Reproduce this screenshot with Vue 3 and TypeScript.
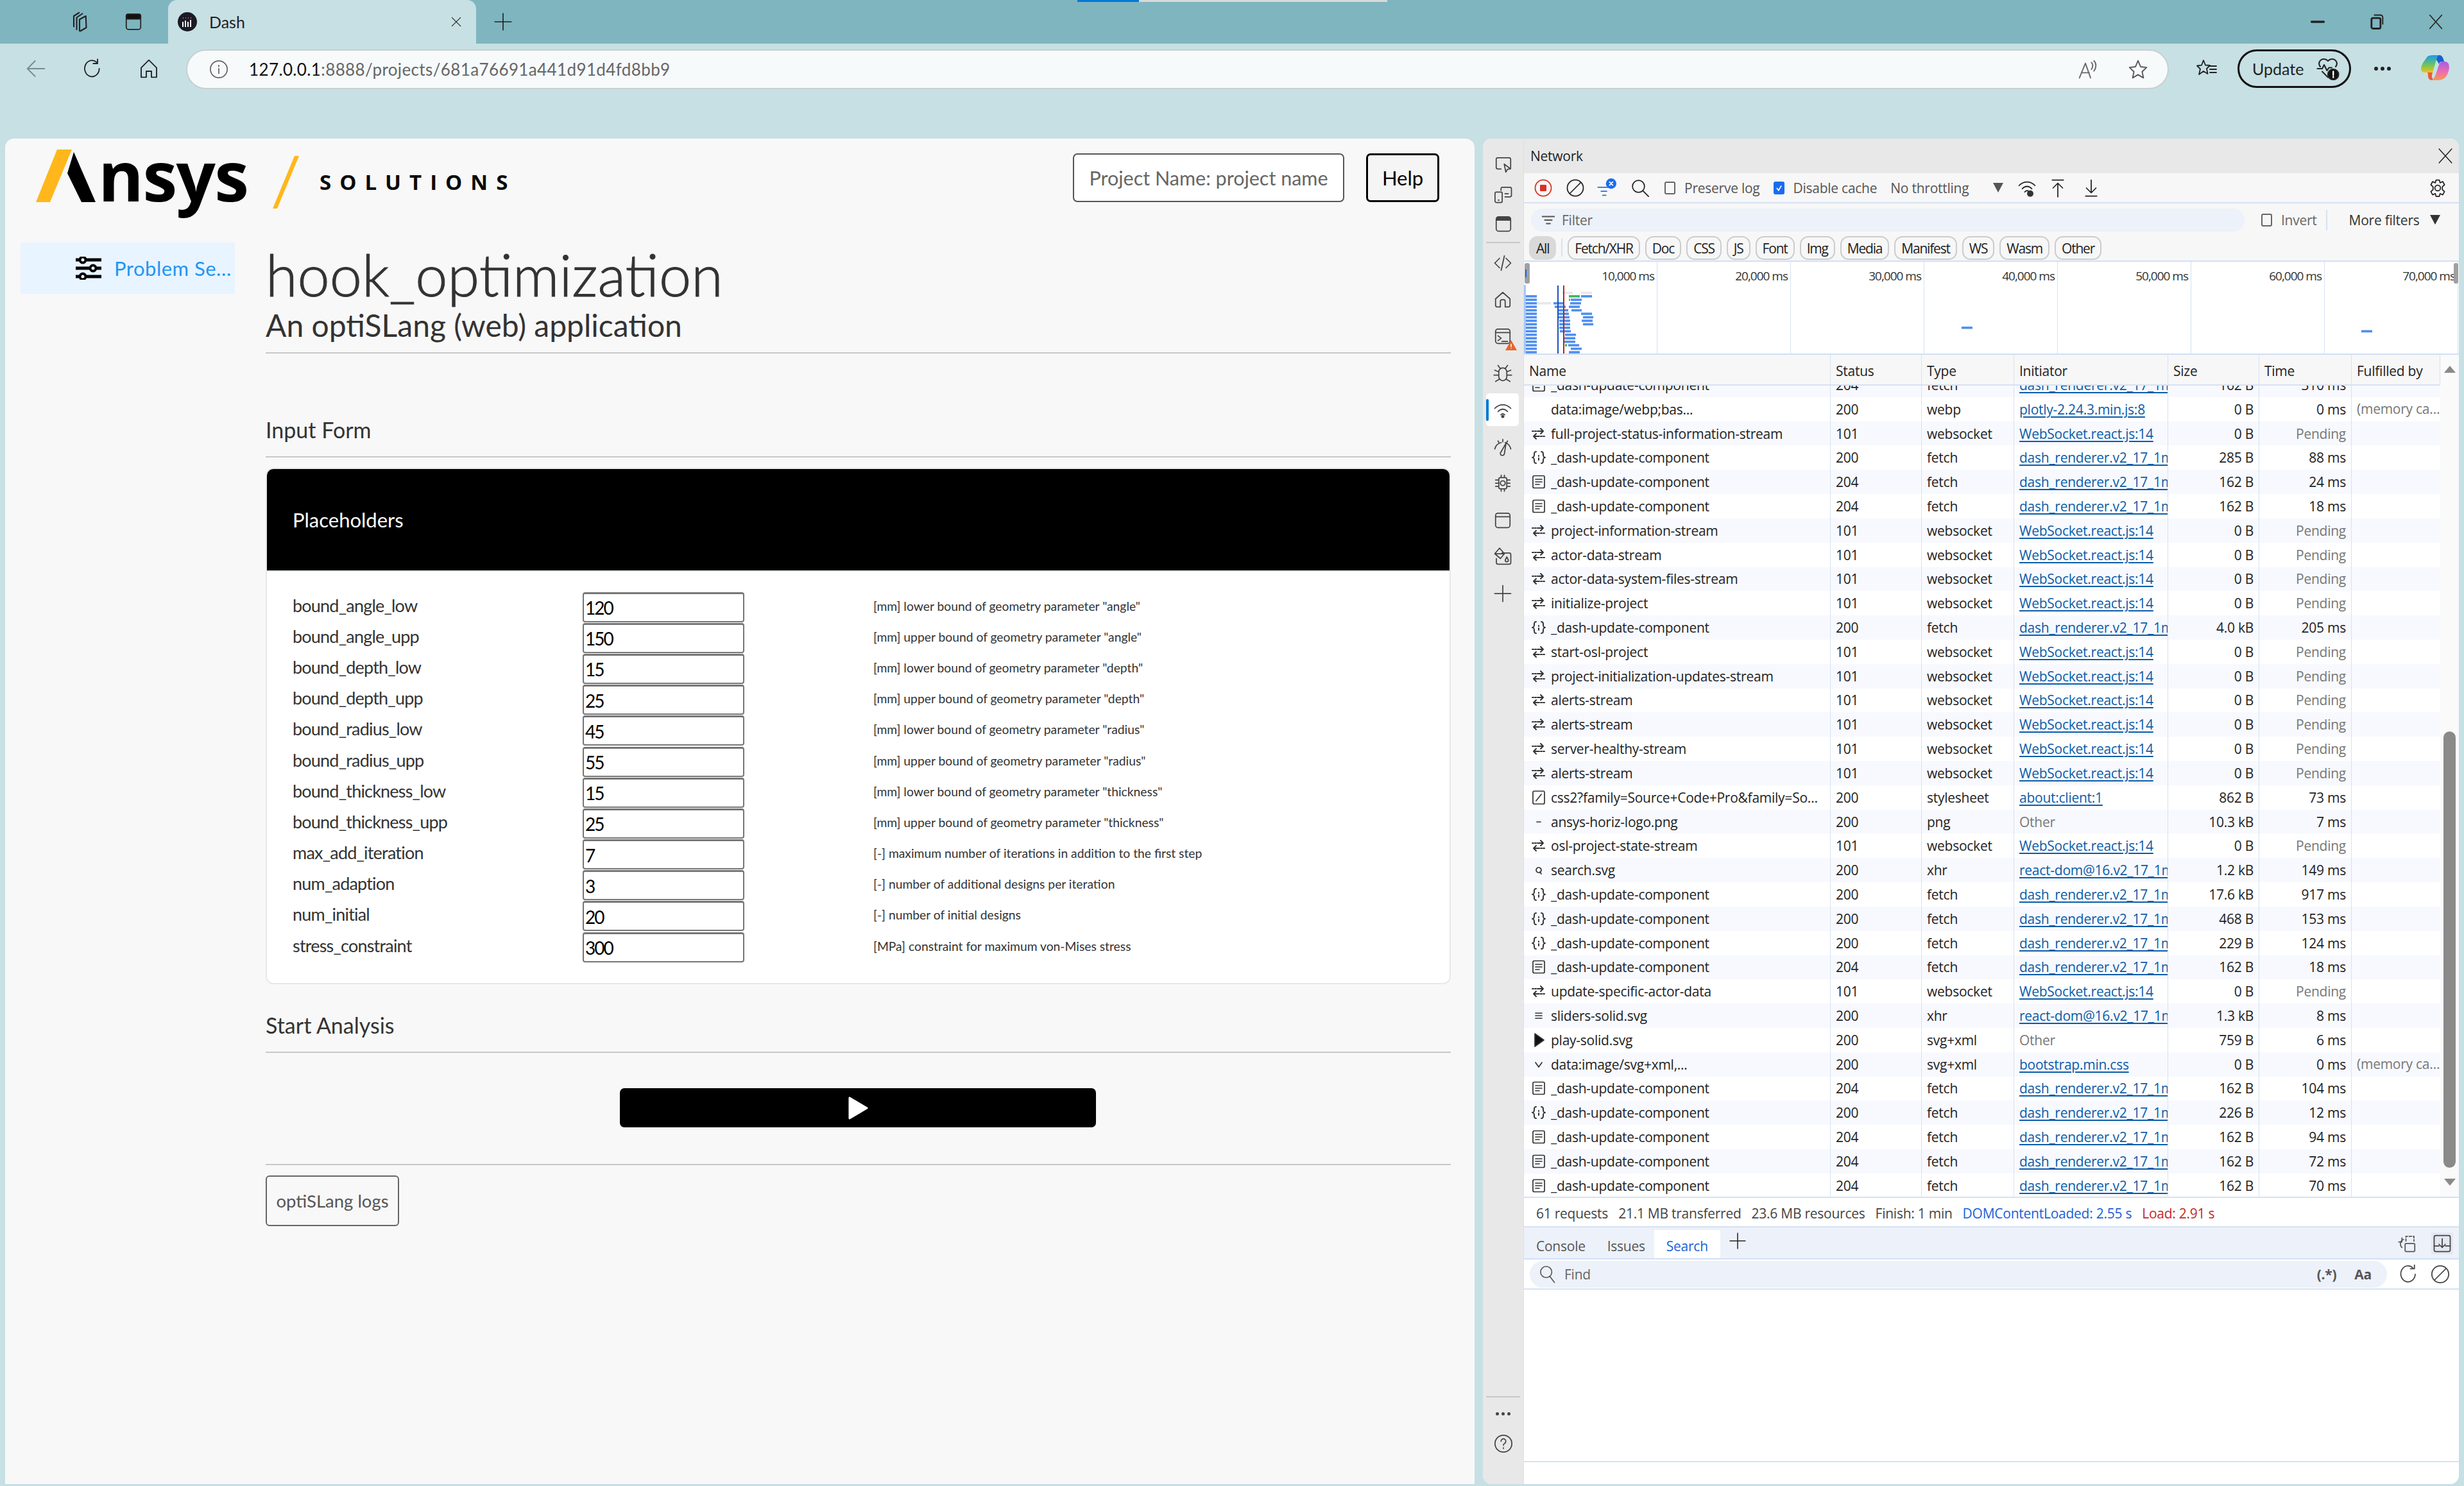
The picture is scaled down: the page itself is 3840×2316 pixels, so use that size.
<template>
  <div class="screen">
    <div class="loadbar"><span class="loadbar-fill"></span></div>

    <header class="tabbar">
      <svg class="ic tb-work" viewBox="0 0 24 24"><path d="M9 20V7.500L15 3.500M6 17V6L11.500 2.500M12 21.500V9.500l6.500-3.500 .5 12-6 3.500z" /></svg>
      <svg class="ic tb-vert" viewBox="0 0 24 24"><rect x="3" y="2.500" width="18" height="19" rx="3" /><rect x="3" y="2.500" width="18" height="6" rx="2" fill="#111" /></svg>
      <div class="tab">
        <span class="favicon">
          <svg viewBox="0 0 30 30"><circle cx="15" cy="15" r="15" fill="#1b1b24" /><path d="M8 15v8M12 13v10M16 15v8M20 12v11" stroke="#fff" stroke-width="2" /><path d="M8 9h1M12 9h1M16 9h1M20 9h1" stroke="#e0558f" stroke-width="2" /></svg>
        </span>
        <span class="tab-title">Dash</span>
        <svg class="ic tab-x" viewBox="0 0 24 24"><path d="M4 4l16 16M20 4L4 20" /></svg>
      </div>
      <svg class="ic tb-plus" viewBox="0 0 24 24"><path d="M12 1v22M1 12h22" /></svg>
      <div class="win-btns">
        <svg class="ic" viewBox="0 0 24 24"><path d="M4 12h16" stroke-width="3" /></svg>
        <svg class="ic" viewBox="0 0 24 24"><rect x="5" y="7" width="12" height="14" rx="2" stroke-width="2.400" /><path d="M9 3h8a3 3 0 0 1 3 3v9" stroke-width="1.600" /></svg>
        <svg class="ic" viewBox="0 0 24 24"><path d="M4 3l16 18M20 3L4 21" /></svg>
      </div>
    </header>

    <div class="toolbar">
      <svg class="ic nav nav-back" viewBox="0 0 24 24"><path d="M22 12H3M11 3l-9 9 9 9" /></svg>
      <svg class="ic nav" viewBox="0 0 24 24"><path d="M20 12a8.500 9.500 0 1 1-3-7.400M18 1v5h-5" /></svg>
      <svg class="ic nav" viewBox="0 0 24 24"><path d="M3 11l9-9 9 9v11h-6v-7H9v7H3z" /></svg>
      <div class="addr">
        <svg class="ic addr-info" viewBox="0 0 24 24"><circle cx="12" cy="12" r="10.500" /><path d="M12 11v6M12 7v1.500" /></svg>
        <span class="addr-url"><b>127.0.0.1</b>:8888/projects/681a76691a441d91d4fd8bb9</span>
        <svg class="ic addr-read" viewBox="0 0 24 24"><path d="M2 22L9 5l6 17M4.500 16h9M16 4c2 2 2 5 0 8M19 2c3 3 3 8 0 12" /></svg>
        <svg class="ic addr-star" viewBox="0 0 24 24"><path d="M12 2l3 7 7 .8-5.200 5 1.500 7.200-6.300-3.700L5.700 22l1.500-7.200L2 9.800 9 9z" /></svg>
      </div>
      <svg class="ic tool-fav" viewBox="0 0 34 30"><path d="M12 2l3 7.500 7 .5-5 5 1.500 8-6.500-4-7 5 2-8.500L2 10.500l7-.8z" /><path d="M21 11h11M22 16h10M22 21h10" /></svg>
      <div class="update">
        <span>Update</span>
        <svg class="ic" viewBox="0 0 24 24"><path d="M4 10C1 6 4 2 8 2c2 0 3 1 4 2 1-1 2-2 4-2 4 0 7 4 4 8M1 12h5l2-4 3 6 2-3h3M6 15l6 6" /><circle cx="17.500" cy="18" r="5.500" fill="#111" /><path d="M17.500 15v3.500M17.500 20.200v.8" stroke="#fff" stroke-width="1.600" /></svg>
      </div>
      <span class="dots"><i></i><i></i><i></i></span>
      <svg class="copilot" viewBox="0 0 44 39">
        <defs>
          <linearGradient id="cp-left" x1="0" y1="0" x2="0" y2="1">
            <stop offset="0" stop-color="#1a9cf0" />
            <stop offset="0.55" stop-color="#6cc45a" />
            <stop offset="1" stop-color="#f2c21a" />
          </linearGradient>
          <linearGradient id="cp-right" x1="0" y1="0" x2="0" y2="1">
            <stop offset="0" stop-color="#a65ee0" />
            <stop offset="0.55" stop-color="#ee6cb4" />
            <stop offset="1" stop-color="#f79a4a" />
          </linearGradient>
        </defs>
        <path d="M10 2Q13 0 18 0H30Q26 1 24 7L18 27H6Q0 27 0 21Q0 17 3 12Z" fill="url(#cp-left)" />
        <path d="M10 27H18L17 31Q16 36 21 39H16Q11 38 11 32Q11 28 10 27Z" fill="#ec5a3a" />
        <path d="M24 0H30Q34 1 36 10H33Q29 10 28 14L24 7Q25 2 28 0Z" fill="#1b5fd0" />
        <path d="M34 10H38Q44 11 44 19Q44 24 41 30Q37 38 28 39H16Q20 38 23 30L28 15Q30 10 34 10Z" fill="url(#cp-right)" />
      </svg>
    </div>

    <div class="desk">
      <main class="page">
        <div class="page-head">
          <div class="logo">
            <svg class="logo-mark" viewBox="0 0 93 82"><path d="M33 0h23L22 82H0z" fill="#ffb71b" /><path d="M59 4l34 78H71L49 37z" fill="#000" /></svg>
            <span class="logo-word">nsys</span>
            <svg class="logo-slash" viewBox="0 0 41 82"><path d="M34 0h7L7 82H0z" fill="#ffb71b" /></svg>
            <span class="logo-sub">SOLUTIONS</span>
          </div>
          <div class="head-actions">
            <div class="project-box">Project Name: project name</div>
            <button class="help-btn">Help</button>
          </div>
        </div>

        <div class="page-body">
          <nav class="side">
            <div class="side-item">
              <svg class="side-icon" viewBox="0 0 40 36">
                <path d="M0 5h40M0 18h40M0 31h40" stroke="#000" stroke-width="5" stroke-linecap="round" />
                <circle cx="11" cy="5" r="4.500" fill="#f8f8f8" stroke="#000" stroke-width="4" />
                <circle cx="27" cy="18" r="4.500" fill="#f8f8f8" stroke="#000" stroke-width="4" />
                <circle cx="11" cy="31" r="4.500" fill="#f8f8f8" stroke="#000" stroke-width="4" />
              </svg>
              <span class="side-text">Problem Setup</span>
            </div>
          </nav>

          <section class="content">
            <h1 class="title">hook_optimization</h1>
            <p class="subtitle">An optiSLang (web) application</p>
            <hr class="rule rule-a" />

            <h2 class="section">Input Form</h2>
            <hr class="rule rule-b" />

            <div class="card">
              <div class="card-head">Placeholders</div>
              <div class="card-body">
                <div class="param" v-for="p in params" :key="p.name">
                  <span class="param-name">{{ p.name }}</span>
                  <input class="param-input" :value="p.value" />
                  <span class="param-hint">{{ p.hint }}</span>
                </div>
              </div>
            </div>

            <h2 class="section section-start">Start Analysis</h2>
            <hr class="rule rule-b" />

            <button class="run-btn">
              <svg viewBox="0 0 32 36"><path d="M3 2l27 16L3 34z" fill="#fff" stroke="#fff" stroke-width="3" stroke-linejoin="round" /></svg>
            </button>

            <hr class="rule rule-c" />
            <button class="logs-btn">optiSLang logs</button>
          </section>
        </div>
      </main>

      <aside class="devtools">
        <div class="dt-strip">
          <div class="strip-top">
            <div class="sbtn sbtn-s" v-for="(ic, i) in stripA" :key="'a' + i">
              <svg class="ic sicon" viewBox="0 0 24 24"><path v-if="ic.solid" :d="ic.solid" fill="#444" stroke="none" /><path :d="ic.d" /></svg>
            </div>
            <div class="strip-div"></div>
            <div class="sbtn" v-for="(ic, i) in stripB" :key="'b' + i">
              <span class="swrap" :class="{ 'swrap-on': ic.active }">
                <svg class="ic sicon" viewBox="0 0 24 24"><path v-if="ic.solid" :d="ic.solid" fill="#444" stroke="none" /><path :d="ic.d" /></svg>
                <svg v-if="ic.warn" class="warn" viewBox="0 0 18 16"><path d="M9 0l9 16H0z" fill="#e8652a" /><path d="M9 6v5M9 12.500v1" stroke="#fff" stroke-width="1.500" /></svg>
              </span>
            </div>
          </div>
          <div class="strip-bottom">
            <div class="strip-div"></div>
            <span class="dots dots-s"><i></i><i></i><i></i></span>
            <svg class="ic sicon" viewBox="0 0 24 24"><circle cx="12" cy="12" r="10.500" /><path d="M9 9a3 3 0 1 1 4.500 2.600c-1 .6-1.500 1.200-1.500 2.400M12 17v1" /></svg>
          </div>
        </div>

        <div class="dt-main">
          <div class="dt-title">
            <span>Network</span>
            <svg class="ic" viewBox="0 0 24 24"><path d="M3 2l18 20M21 2L3 22" /></svg>
          </div>

          <div class="dt-tools">
            <svg class="ic ti rec" viewBox="0 0 24 24"><circle cx="12" cy="12" r="10" stroke="#d93025" /><rect x="8" y="8" width="8" height="8" rx="1" fill="#d93025" stroke="none" /></svg>
            <svg class="ic ti" viewBox="0 0 24 24"><circle cx="12" cy="12" r="10" /><path d="M19 5L5 19" /></svg>
            <svg class="ic ti" viewBox="0 0 24 24"><path d="M1 11h13M5 16h7M7 21h4" stroke="#1a73e8" /><circle cx="17.500" cy="6.500" r="6.500" fill="#1a6cf0" stroke="none" /><path d="M15.500 4.500l4 4M19.500 4.500l-4 4" stroke="#fff" stroke-width="1.500" /></svg>
            <svg class="ic ti ti-search" viewBox="0 0 24 24"><circle cx="10" cy="10" r="7.500" /><path d="M15.500 15.500l7 7" /></svg>
            <label class="cb cb-first"><span class="box"></span>Preserve log</label>
            <label class="cb cb-on"><span class="box box-on"><svg viewBox="0 0 18 20"><path d="M4 10l4 5 6-10" fill="none" stroke="#fff" stroke-width="2.500" /></svg></span>Disable cache</label>
            <span class="throttle">No throttling</span>
            <span class="arrow-down"></span>
            <svg class="ic ti ti-wifi" viewBox="0 0 24 24"><path d="M2 9c6-6 14-6 20 0M6 13c4-4 8-4 12 0M9 17c2-2 4-2 5-1" /><circle cx="16" cy="19" r="4" fill="#333" stroke="none" /></svg>
            <svg class="ic ti ti-up" viewBox="0 0 24 24"><path d="M5 2h14M12 23V7M6 12l6-6 6 6" /></svg>
            <svg class="ic ti" viewBox="0 0 24 24"><path d="M5 22h14M12 2v15M6 12l6 6 6-6" /></svg>
            <svg class="ic ti ti-gear" viewBox="0 0 24 24"><circle cx="12" cy="12" r="3.500" /><path d="M10 2h4l1 3.500 3.300-1.500 2.200 4-2.700 2.500v3.500l2.700 2.500-2.200 4-3.300-1.500-1 3.500h-4l-1-3.500-3.300 1.500-2.200-4 2.700-2.500v-3.500L3.500 8l2.200-4L9 5.500z" /></svg>
          </div>

          <div class="dt-filter">
            <div class="filter-input">
              <svg class="ic fi" viewBox="0 0 24 24"><path d="M2 6h20M6 12h12M9 18h6" stroke-width="2.400" /></svg>
              <span>Filter</span>
            </div>
            <label class="cb cb-invert"><span class="box"></span>Invert</label>
            <span class="more-filters">More filters</span>
            <span class="arrow-down arrow-dark"></span>
          </div>

          <div class="dt-chips">
            <span class="chip chip-all">All</span>
            <span class="chip-sep"></span>
            <span class="chip" v-for="c in chips" :key="c">{{ c }}</span>
          </div>

          <div class="dt-overview">
            <div class="ov-cell" v-for="t in ticks" :key="t"><span>{{ t }}</span></div>
            <svg class="ov-bars" viewBox="0 0 1457 145" width="1457" height="145">
              <rect x="0" y="36" width="3" height="109" fill="#a8c7fa" />
              <rect v-for="(b, i) in bars" :key="i" :x="b.x" :y="b.y" :width="b.w" height="3.600" :fill="b.c" />
              <path d="M53 37v108" stroke="#1a4fc0" stroke-width="2" />
              <path d="M62 37v108" stroke="#b3261e" stroke-width="2" />
              <rect x="1" y="2" width="8" height="32" rx="3" fill="#a0a0a0" />
              <rect x="2" y="12" width="2" height="12" fill="#1a6cf0" />
              <rect x="1449" y="2" width="7" height="32" rx="3" fill="#a0a0a0" />
            </svg>
          </div>

          <div class="dt-table">
            <div class="table-main">
              <div class="thead">
                <span v-for="h in heads" :key="h" class="th">{{ h }}</span>
              </div>
              <div class="tbody">
                <div class="tlist">
                  <div class="tr" v-for="(r, i) in rows" :key="i">
                    <span class="td td-name">
                      <span class="row-icon">
                        <svg class="ic" viewBox="0 0 24 24" :class="'ri-' + r.icon">
                          <path v-for="(d, k) in rowIcons[r.icon]" :key="k" :d="d" />
                        </svg>
                      </span>
                      <span class="name-text">{{ r.name }}</span>
                    </span>
                    <span class="td">{{ r.status }}</span>
                    <span class="td">{{ r.type }}</span>
                    <span class="td td-init"><a :class="{ plain: r.init === 'Other' }">{{ r.init }}</a></span>
                    <span class="td td-r">{{ r.size }}</span>
                    <span class="td td-r" :class="{ pending: r.time === 'Pending' }">{{ r.time }}</span>
                    <span class="td td-ful">{{ r.fulfilled }}</span>
                  </div>
                </div>
              </div>
            </div>
            <div class="vbar">
              <span class="vbar-up"></span>
              <span class="vbar-thumb"></span>
              <span class="vbar-down"></span>
            </div>
          </div>

          <div class="dt-status">
            <span>61 requests</span>
            <span>21.1 MB transferred</span>
            <span>23.6 MB resources</span>
            <span>Finish: 1 min</span>
            <span class="st-dom">DOMContentLoaded: 2.55 s</span>
            <span class="st-load">Load: 2.91 s</span>
          </div>

          <div class="dt-drawer">
            <span class="dr-tab dr-console">Console</span>
            <span class="dr-tab dr-issues">Issues</span>
            <span class="dr-tab dr-active">Search</span>
            <svg class="ic dr-plus" viewBox="0 0 24 24"><path d="M12 1v22M1 12h22" /></svg>
            <svg class="ic dr-r1" viewBox="0 0 24 24"><path d="M7 7a6 6 0 0 0-2 10M5 5v5H1" /><rect x="9" y="12" width="12" height="10" rx="1" /><path d="M10 9V3h10v6" stroke-dasharray="3 2" /></svg>
            <span class="dr-dock"><svg class="ic" viewBox="0 0 24 24"><rect x="2" y="2" width="20" height="20" rx="2" /><path d="M2 15h6M16 15h6M12 6v11M8 13l4 4 4-4" /></svg></span>
          </div>

          <div class="dt-find">
            <div class="find-input">
              <svg class="ic fi2" viewBox="0 0 24 24"><circle cx="10" cy="9" r="7.500" /><path d="M15 15l6 8" /></svg>
              <span class="find-label">Find</span>
              <span class="find-re">(.*)</span>
              <span class="find-aa">Aa</span>
            </div>
            <svg class="ic ti2" viewBox="0 0 24 24"><path d="M20 12a9 10 0 1 1-3-8M19 0v5h-5" /></svg>
            <svg class="ic ti2" viewBox="0 0 24 24"><circle cx="12" cy="12" r="10.500" /><path d="M19 5L5 19" /></svg>
          </div>

          <div class="dt-empty"></div>
          <div class="dt-foot"></div>
        </div>
      </aside>
    </div>
  </div>
</template>

<script setup lang="ts">
interface Row {
  icon: string
  name: string
  status: number
  type: string
  init: string
  size: string
  time: string
  fulfilled?: string
}

interface StripIcon {
  d: string
  solid?: string
  active?: boolean
  warn?: boolean
}

const params = [
  { name: 'bound_angle_low', value: '120', hint: '[mm] lower bound of geometry parameter "angle"' },
  { name: 'bound_angle_upp', value: '150', hint: '[mm] upper bound of geometry parameter "angle"' },
  { name: 'bound_depth_low', value: '15', hint: '[mm] lower bound of geometry parameter "depth"' },
  { name: 'bound_depth_upp', value: '25', hint: '[mm] upper bound of geometry parameter "depth"' },
  { name: 'bound_radius_low', value: '45', hint: '[mm] lower bound of geometry parameter "radius"' },
  { name: 'bound_radius_upp', value: '55', hint: '[mm] upper bound of geometry parameter "radius"' },
  { name: 'bound_thickness_low', value: '15', hint: '[mm] lower bound of geometry parameter "thickness"' },
  { name: 'bound_thickness_upp', value: '25', hint: '[mm] upper bound of geometry parameter "thickness"' },
  { name: 'max_add_iteration', value: '7', hint: '[-] maximum number of iterations in addition to the first step' },
  { name: 'num_adaption', value: '3', hint: '[-] number of additional designs per iteration' },
  { name: 'num_initial', value: '20', hint: '[-] number of initial designs' },
  { name: 'stress_constraint', value: '300', hint: '[MPa] constraint for maximum von-Mises stress' },
]

const chips = ['Fetch/XHR', 'Doc', 'CSS', 'JS', 'Font', 'Img', 'Media', 'Manifest', 'WS', 'Wasm', 'Other']
const ticks = ['10,000 ms', '20,000 ms', '30,000 ms', '40,000 ms', '50,000 ms', '60,000 ms', '70,000 ms']
const heads = ['Name', 'Status', 'Type', 'Initiator', 'Size', 'Time', 'Fulfilled by']

const stripA: StripIcon[] = [
  { d: 'M9 17H5a2 2 0 0 1-2-2V5a2 2 0 0 1 2-2h14a2 2 0 0 1 2 2v10a2 2 0 0 1-1 1.700M13 11l2 10 2-3.500 4-.5z' },
  { d: 'M9 7V5a2 2 0 0 1 2-2h9a2 2 0 0 1 2 2v8a2 2 0 0 1-2 2h-6M14 11h4M3 9h6a1.500 1.500 0 0 1 1.500 1.500v10A1.500 1.500 0 0 1 9 22H3a1.500 1.500 0 0 1-1.500-1.500v-10A1.500 1.500 0 0 1 3 9zM5.500 19h1' },
  { d: 'M3 6a3 3 0 0 1 3-3h12a3 3 0 0 1 3 3v12a3 3 0 0 1-3 3H6a3 3 0 0 1-3-3z', solid: 'M3 6a3 3 0 0 1 3-3h12a3 3 0 0 1 3 3v2H3z' },
]

const stripB: StripIcon[] = [
  { d: 'M8 6l-6 6 6 6M16 6l6 6-6 6M14 3l-4 18' },
  { d: 'M3 11l9-8 9 8v8a2 2 0 0 1-2 2h-4v-7a2 2 0 0 0-2-2h-2a2 2 0 0 0-2 2v7H5a2 2 0 0 1-2-2z' },
  { d: 'M3 6a3 3 0 0 1 3-3h12a3 3 0 0 1 3 3v12a3 3 0 0 1-3 3H6a3 3 0 0 1-3-3zM3 7.500h18M6 11.500l4 3-4 3M11 18.500h7', warn: true },
  { d: 'M7 10a5 5 0 0 1 10 0v6a5 5 0 0 1-10 0zM9 6L6 2M15 6l3-4M7 10L2 8M17 10l5-2M7 14H1M17 14h6M8 19l-5 3M16 19l5 3' },
  { d: 'M2 10c6-6 14-6 20 0M6 14c4-4 8-4 12 0M9.500 18c1.500-1.500 3.500-1.500 5 0', solid: 'M12 18a2 2 0 1 0 .01 0z', active: true },
  { d: 'M2 15c1-4 4-7 8-8M15 7c3 1 6 4 7 8M12 3v3M6 5l1.500 2.500M18 5l-1.500 2.500M9 20l7-12-2 13a2.500 2.500 0 0 1-5-1z' },
  { d: 'M7 7a2 2 0 0 1 2-2h6a2 2 0 0 1 2 2v10a2 2 0 0 1-2 2H9a2 2 0 0 1-2-2zM12 9a3 3 0 1 0 .01 0zM3 8h4M3 12h4M3 16h4M17 8h4M17 12h4M17 16h4M10 2v3M14 2v3M10 19v3M14 19v3' },
  { d: 'M3 6a3 3 0 0 1 3-3h12a3 3 0 0 1 3 3v12a3 3 0 0 1-3 3H6a3 3 0 0 1-3-3zM3 7.500h18' },
  { d: 'M11 7h9a2 2 0 0 1 2 2v10a2 2 0 0 1-2 2H6a2 2 0 0 1-2-2v-5M8 1l6 7-5 6-7-6zM2 8h12M17 12l2 4a2 2 0 0 1-4 0z' },
  { d: 'M12 2v20M2 12h20' },
]

const rowIcons: Record<string, string[]> = {
  ws: ['M2 8h2M6 8h2M10 8h9M15 4l4 4-4 4', 'M21 16h-2M17 16h-2M13 16H4M8 12l-4 4 4 4'],
  json: ['M8 3c-3 0-3 2-3 5s-2 4-3 4c1 0 3 1 3 4s0 5 3 5', 'M16 3c3 0 3 2 3 5s2 4 3 4c-1 0-3 1-3 4s0 5-3 5', 'M12 9v1M12 13v3'],
  doc: ['M5 2.500h14a2 2 0 0 1 2 2v15a2 2 0 0 1-2 2H5a2 2 0 0 1-2-2v-15a2 2 0 0 1 2-2z', 'M7 8h10M7 12h10M7 16h6'],
  none: [],
  css: ['M5 2h14a2 2 0 0 1 2 2v16a2 2 0 0 1-2 2H5a2 2 0 0 1-2-2V4a2 2 0 0 1 2-2z', 'M16 7L8 17'],
  dot: ['M9 12h6'],
  search: ['M12 8a4 4 0 1 0 .01 0zM14 15l2 3'],
  sliders: ['M7 8h10M7 12h10M7 16h10'],
  play: ['M6 2l14 10L6 22z'],
  chev: ['M7 9l5 7 5-7'],
}

const dash = 'dash_renderer.v2_17_1m1747.js:14'
const react = 'react-dom@16.v2_17_1m1747.js:14'
const sock = 'WebSocket.react.js:14'

function ws(name: string): Row {
  return { icon: 'ws', name, status: 101, type: 'websocket', init: sock, size: '0 B', time: 'Pending' }
}
function upd(status: number, size: string, time: string): Row {
  return { icon: status === 204 ? 'doc' : 'json', name: '_dash-update-component', status, type: 'fetch', init: dash, size, time }
}

const rows: Row[] = [
  upd(204, '162 B', '310 ms'),
  { icon: 'none', name: 'data:image/webp;bas...', status: 200, type: 'webp', init: 'plotly-2.24.3.min.js:8', size: '0 B', time: '0 ms', fulfilled: '(memory cache)' },
  ws('full-project-status-information-stream'),
  upd(200, '285 B', '88 ms'),
  upd(204, '162 B', '24 ms'),
  upd(204, '162 B', '18 ms'),
  ws('project-information-stream'),
  ws('actor-data-stream'),
  ws('actor-data-system-files-stream'),
  ws('initialize-project'),
  upd(200, '4.0 kB', '205 ms'),
  ws('start-osl-project'),
  ws('project-initialization-updates-stream'),
  ws('alerts-stream'),
  ws('alerts-stream'),
  ws('server-healthy-stream'),
  ws('alerts-stream'),
  { icon: 'css', name: 'css2?family=Source+Code+Pro&family=Source+Sans+Pro', status: 200, type: 'stylesheet', init: 'about:client:1', size: '862 B', time: '73 ms' },
  { icon: 'dot', name: 'ansys-horiz-logo.png', status: 200, type: 'png', init: 'Other', size: '10.3 kB', time: '7 ms' },
  ws('osl-project-state-stream'),
  { icon: 'search', name: 'search.svg', status: 200, type: 'xhr', init: react, size: '1.2 kB', time: '149 ms' },
  upd(200, '17.6 kB', '917 ms'),
  upd(200, '468 B', '153 ms'),
  upd(200, '229 B', '124 ms'),
  upd(204, '162 B', '18 ms'),
  ws('update-specific-actor-data'),
  { icon: 'sliders', name: 'sliders-solid.svg', status: 200, type: 'xhr', init: react, size: '1.3 kB', time: '8 ms' },
  { icon: 'play', name: 'play-solid.svg', status: 200, type: 'svg+xml', init: 'Other', size: '759 B', time: '6 ms' },
  { icon: 'chev', name: 'data:image/svg+xml,...', status: 200, type: 'svg+xml', init: 'bootstrap.min.css', size: '0 B', time: '0 ms', fulfilled: '(memory cache)' },
  upd(204, '162 B', '104 ms'),
  upd(200, '226 B', '12 ms'),
  upd(204, '162 B', '94 ms'),
  upd(204, '162 B', '72 ms'),
  upd(204, '162 B', '70 ms'),
]

// waterfall: [row, start, end] read off the overview, in panel px
const blue = '#4f8ff0'
const grey = '#e6e8ea'
const green = '#3fb56a'
const spans: [number, number, number, string][] = [
  [-1, 59, 76, grey], [-1, 89, 106, grey],
  [0, 70, 87, green], [0, 89, 106, blue],
  [1, 73, 90, blue], [1, 70, 72, green],
  [2, 20, 42, grey], [2, 46, 62, blue], [2, 72, 89, blue],
  [3, 48, 65, blue], [3, 70, 87, blue],
  [4, 52, 69, blue], [4, 74, 90, blue],
  [5, 53, 70, blue], [5, 89, 106, blue],
  [6, 54, 71, blue], [6, 92, 108, blue],
  [7, 55, 72, blue], [7, 90, 107, blue],
  [8, 55, 72, blue], [8, 92, 108, blue],
  [9, 55, 72, blue], [9, 682, 699, blue],
  [10, 56, 73, blue], [10, 1305, 1322, blue],
  [11, 64, 81, blue], [12, 63, 80, blue], [13, 63, 80, blue],
  [14, 64, 67, green], [14, 69, 86, blue], [15, 73, 90, blue], [16, 70, 87, blue],
]
const bars = [
  ...Array.from({ length: 17 }, (_, i) => ({ x: 3, y: 52 + i * 5.45, w: 17, c: blue })),
  ...spans.map(([row, a, b, c]) => ({ x: a, y: 52 + row * 5.45, w: b - a, c })),
]
</script>

<style>
html, body { margin: 0; padding: 0; background: #c7e0e4; }
</style>

<style scoped>
.screen {
  position: relative;
  width: 3840px;
  height: 2316px;
  overflow: hidden;
  background: #c7e0e4;
  font-family: "Lato", "Open Sans", sans-serif;
  color: #222;
}
.ic {
  fill: none;
  stroke: #222;
  stroke-width: 1.400;
  stroke-linejoin: round;
  stroke-linecap: round;
  flex: none;
}
.loadbar {
  position: absolute;
  left: 1679px;
  top: 0;
  width: 483px;
  height: 3px;
  background: #d9d9d9;
}
.loadbar-fill { display: block; width: 96px; height: 3px; background: #0078d4; }

.tabbar {
  height: 68px;
  background: #7fb5bf;
  display: flex;
  align-items: center;
}
.tb-work { width: 36px; height: 36px; margin-left: 106px; }
.tb-vert { width: 30px; height: 30px; margin-left: 51px; margin-right: 39px; }
.tab {
  width: 480px;
  height: 68px;
  background: #c7e0e4;
  border-radius: 14px 14px 0 0;
  display: flex;
  align-items: center;
  box-sizing: border-box;
  padding-left: 15px;
}
.favicon { width: 30px; height: 30px; }
.favicon svg { display: block; }
.tab-title { margin-left: 19px; font-size: 25px; color: #222; }
.tab-x { width: 20px; height: 20px; margin-left: 319px; }
.tb-plus { width: 28px; height: 28px; margin-left: 28px; }
.win-btns { margin-left: auto; display: flex; gap: 64px; padding-right: 30px; align-items: center; }
.win-btns .ic { width: 28px; height: 28px; }

.toolbar {
  height: 148px;
  display: flex;
  align-items: flex-start;
  box-sizing: border-box;
}
.nav { width: 32px; height: 32px; margin-top: 23px; margin-left: 56px; }
.nav:first-child { margin-left: 40px; }
.nav-back { stroke: #7a8a90; }
.addr {
  margin-left: 42px;
  margin-top: 9px;
  width: 3090px;
  height: 62px;
  box-sizing: border-box;
  background: #f6fafb;
  border: 2px solid #c9cfd1;
  border-radius: 31px;
  display: flex;
  align-items: center;
  padding-left: 34px;
}
.addr-info { width: 30px; height: 30px; stroke: #666; }
.addr-url { margin-left: 32px; font-size: 26px; color: #666; flex: 1; letter-spacing: 0.38px; }
.addr-url b { font-weight: 400; color: #111; }
.addr-read { width: 32px; height: 32px; stroke: #666; margin-right: 46px; }
.addr-star { width: 32px; height: 32px; stroke: #555; margin-right: 30px; }
.tool-fav { width: 34px; height: 30px; margin-left: 42px; margin-top: 24px; stroke-width: 1.800; }
.update {
  margin-left: 31px;
  margin-top: 9px;
  width: 177px;
  height: 60px;
  box-sizing: border-box;
  border: 3px solid #111;
  border-radius: 30px;
  display: flex;
  align-items: center;
  padding-left: 20px;
  gap: 20px;
  font-size: 25px;
}
.update .ic { width: 36px; height: 36px; }
.dots { display: flex; gap: 4px; margin-left: 36px; margin-top: 36px; width: 28px; flex: none; }
.dots i { width: 6px; height: 6px; border-radius: 50%; background: #222; display: block; }
.dots-s { margin: -3px 0 5px; width: auto; }
.dots-s i { background: #444; width: 5px; height: 5px; }
.copilot { width: 44px; height: 39px; margin-left: 45px; margin-top: 18px; flex: none; }

.desk {
  height: 2097px;
  padding: 0 8px;
  display: flex;
  gap: 13px;
}

/* left: the app */
.page {
  width: 2290px;
  height: 2097px;
  background: #f8f8f8;
  border-radius: 14px 14px 0 0;
  box-sizing: border-box;
  padding: 0 37px 0 24px;
  font-family: "Lato", sans-serif;
}
.page-head {
  height: 162px;
  display: flex;
  justify-content: space-between;
  align-items: flex-start;
}
.logo {
  display: flex;
  align-items: flex-start;
  margin-left: 24px;
  padding-top: 17px;
}
.logo-mark { width: 93px; height: 82px; display: block; }
.logo-word {
  font-family: "Open Sans", sans-serif;
  font-size: 108px;
  font-weight: 700;
  color: #000;
  line-height: 80px;
  margin-left: 4px;
  letter-spacing: -1.600px;
  width: 232px;
}
.logo-slash { width: 41px; height: 82px; margin-left: 40px; margin-top: 10px; display: block; }
.logo-sub {
  font-family: "Open Sans", sans-serif;
  font-weight: 700;
  font-size: 33px;
  letter-spacing: 13px;
  color: #0a0a0a;
  margin-left: 32px;
  margin-top: 28px;
  line-height: 46px;
}
.head-actions { display: flex; gap: 34px; padding-top: 23px; padding-right: 18px; }
.project-box {
  width: 423px;
  height: 76px;
  box-sizing: border-box;
  background: #fff;
  border: 2.500px solid #555;
  border-radius: 7px;
  display: flex;
  align-items: center;
  justify-content: center;
  font-size: 30.500px;
  color: #666;
}
.help-btn {
  width: 114px;
  height: 76px;
  background: #f5f5f5;
  border: 3px solid #000;
  border-radius: 7px;
  font: inherit;
  font-size: 31px;
  color: #000;
  padding: 0;
}
.page-body { display: flex; }
.side { width: 334px; flex: none; }
.side-item {
  height: 80px;
  background: #e8f4ff;
  display: flex;
  align-items: center;
  padding-left: 86px;
  box-sizing: border-box;
}
.side-icon { width: 40px; height: 36px; flex: none; }
.side-text {
  margin-left: 20px;
  width: 188px;
  font-size: 31px;
  letter-spacing: 0.5px;
  color: #2196f3;
  white-space: nowrap;
  overflow: hidden;
  text-overflow: ellipsis;
}
.content { margin-left: 48px; width: 1847px; }
.title {
  margin: -1px 0 1px;
  font-size: 90px;
  font-weight: 300;
  line-height: 100px;
  color: #333;
  -webkit-text-stroke: 1px #333;
}
.subtitle {
  margin: 2px 0 0;
  font-size: 48px;
  font-weight: 400;
  line-height: 56px;
  color: #333;
}
.rule { border: 0; height: 2px; margin: 0; background: #c8c8c8; }
.rule-a { margin-top: 14px; }
.rule-b { margin-top: 19px; }
.rule-c { margin-top: 57px; }
.section {
  margin: 97px 0 0;
  font-size: 34px;
  font-weight: 400;
  line-height: 44px;
  color: #333;
}
.section-start { margin-top: 42px; }
.card {
  margin-top: 16px;
  height: 805px;
  box-sizing: border-box;
  background: #fff;
  border: 2px solid #e8e8e8;
  border-radius: 12px;
  overflow: hidden;
}
.card-head {
  height: 160px;
  box-sizing: border-box;
  background: #000;
  border-bottom: 2px solid #dfe3e6;
  color: #fff;
  font-size: 31px;
  display: flex;
  align-items: center;
  padding-left: 40px;
}
.card-body { padding: 31px 0 0 40px; }
.param {
  height: 48.200px;
  display: flex;
  align-items: center;
}
.param-name { width: 452px; font-size: 27px; letter-spacing: -0.8px; color: #333; position: relative; top: -3px; }
.param-input {
  width: 252px;
  height: 47px;
  box-sizing: border-box;
  border: 2px solid #767676;
  border-top-width: 3px;
  border-radius: 4px;
  background: #fff;
  font: inherit;
  font-size: 28px;
  letter-spacing: -2px;
  color: #000;
  padding: 1px 2px 0;
  outline: none;
}
.param-hint { margin-left: 201px; font-size: 19.300px; color: #333; position: relative; top: -2px; }
.run-btn {
  display: flex;
  align-items: center;
  justify-content: center;
  margin: 55px 0 0 552px;
  width: 742px;
  height: 61px;
  background: #000;
  border: 0;
  border-radius: 7px;
  padding: 0;
}
.run-btn svg { width: 32px; height: 36px; }
.logs-btn {
  display: block;
  margin-top: 16px;
  width: 208px;
  height: 79px;
  box-sizing: border-box;
  background: #f8f8f8;
  border: 2px solid #666;
  border-radius: 6px;
  font: inherit;
  font-size: 27.500px;
  color: #555;
  padding: 0;
}

/* right: devtools */
.devtools {
  width: 1521px;
  height: 2097px;
  display: flex;
  background: #fff;
  border-radius: 14px;
  overflow: hidden;
  font-family: "Open Sans", sans-serif;
  font-size: 21px;
  letter-spacing: -0.25px;
  color: #333;
}
.dt-strip {
  width: 64px;
  flex: none;
  background: #e8e8e8;
  border-right: 1px solid #d6e2f2;
  display: flex;
  flex-direction: column;
  justify-content: space-between;
  box-sizing: border-box;
}
.strip-top { padding-top: 18px; }
.sbtn { height: 57.300px; display: flex; align-items: center; justify-content: center; }
.sbtn-s { height: 46px; }
.strip-div { height: 2px; margin: 5px 5px 2px; background: #c8c8c8; align-self: stretch; }
.sicon { width: 30px; height: 30px; stroke: #444; }
.swrap {
  position: relative;
  width: 51px;
  height: 51px;
  border-radius: 5px;
  display: flex;
  align-items: center;
  justify-content: center;
  margin-left: -2px;
}
.swrap-on { background: #fff; }
.swrap-on::before {
  content: "";
  position: absolute;
  left: 0;
  top: 9px;
  width: 4px;
  height: 34px;
  border-radius: 2px;
  background: #0078d4;
}
.warn { position: absolute; right: 3px; bottom: 4px; width: 18px; height: 16px; }
.strip-bottom { display: flex; flex-direction: column; align-items: center; padding-bottom: 48px; gap: 24px; align-self: stretch; }
.dt-main { flex: 1; min-width: 0; display: flex; flex-direction: column; }

.dt-title {
  height: 54px;
  background: #e8e8e8;
  display: flex;
  align-items: center;
  justify-content: space-between;
  padding: 0 8px 0 10px;
  color: #222;
}
.dt-title .ic { width: 26px; height: 26px; }
.dt-tools {
  height: 47px;
  background: #f7f7f7;
  border-bottom: 2px solid #d6e2f2;
  display: flex;
  align-items: center;
  box-sizing: border-box;
  padding-left: 15px;
  position: relative;
}
.ti { width: 30px; height: 30px; margin-right: 19px; }
.rec { margin-right: 20px; }
.ti-search { margin-left: 3px; margin-right: 0; }
.ti-wifi { margin-left: 22px; margin-right: 18px; }
.ti-up { margin-right: 22px; }
.ti-gear { position: absolute; right: 18px; top: 8px; margin: 0; }
.cb { display: inline-flex; align-items: center; gap: 14px; color: #555; }
.cb-first { margin-left: 23px; }
.box {
  width: 17px;
  height: 20px;
  box-sizing: border-box;
  border: 2px solid #666;
  border-radius: 3px;
  display: inline-block;
  flex: none;
}
.box-on { background: #1a6cf0; border-color: #1a6cf0; }
.box-on svg { display: block; width: 13px; height: 16px; }
.cb-on { margin-left: 22px; gap: 13px; }
.throttle { margin-left: 21px; color: #555; }
.arrow-down {
  width: 0;
  height: 0;
  border-left: 8px solid transparent;
  border-right: 8px solid transparent;
  border-top: 15px solid #555;
  margin-left: 38px;
}
.arrow-dark { border-top-color: #333; margin-left: 17px; }

.dt-filter {
  height: 51px;
  background: #f7f7f7;
  display: flex;
  align-items: center;
  box-sizing: border-box;
  padding-left: 11px;
}
.filter-input {
  width: 1112px;
  height: 36px;
  background: #edf1f9;
  border-radius: 18px;
  display: flex;
  align-items: center;
  padding-left: 16px;
  box-sizing: border-box;
  color: #666;
  gap: 10px;
}
.fi { width: 22px; height: 22px; stroke: #555; }
.cb-invert { margin-left: 26px; padding-right: 14px; border-right: 2px solid #d6e2f2; height: 32px; color: #666; }
.more-filters { margin-left: 34px; color: #333; }
.dt-chips {
  height: 40px;
  background: #f7f7f7;
  border-bottom: 2px solid #d0e0f5;
  box-sizing: border-box;
  display: flex;
  gap: 8px;
  padding-left: 8px;
  align-items: flex-start;
}
.chip {
  height: 37px;
  padding: 0 9px;
  box-sizing: border-box;
  border: 2px solid #ccc;
  border-radius: 13px;
  display: flex;
  align-items: center;
  color: #222;
  font-weight: 500;
  letter-spacing: -1.200px;
}
.chip-all { background: #d9d9d9; border-color: #d9d9d9; }
.chip-sep { width: 2px; height: 28px; background: #d6e2f2; margin-top: 4px; }

.dt-overview {
  position: relative;
  height: 143px;
  background: #fff;
  display: flex;
  overflow: hidden;
  border-bottom: 2px solid #d0e0f5;
}
.ov-cell {
  width: 208px;
  flex: none;
  box-sizing: border-box;
  border-right: 1px solid #d6e2f2;
  text-align: right;
  padding: 9px 4px 0 0;
  font-size: 19px;
  letter-spacing: -1px;
  color: #333;
}
.ov-bars { position: absolute; left: 0; top: 0; }

.dt-table { display: flex; height: 1312px; }
.table-main { width: 1428px; flex: none; display: flex; flex-direction: column; }
.thead {
  height: 48px;
  flex: none;
  background: #f7f7f7;
  border-bottom: 2px solid #d6e2f2;
  box-sizing: border-box;
  display: grid;
  grid-template-columns: 478px 142px 144px 240px 142px 144px 138px;
}
.th {
  padding: 4px 0 0 8px;
  border-right: 1px solid #d6e2f2;
  display: flex;
  align-items: center;
  color: #222;
}
.tbody { flex: 1; overflow: hidden; }
.tlist { margin-top: -20px; }
.tr {
  height: 37.820px;
  display: grid;
  grid-template-columns: 478px 142px 144px 240px 142px 144px 138px;
  align-items: stretch;
}
.tr:nth-child(odd) { background: #f7f9fe; }
.td {
  padding: 0 8px;
  border-right: 1px solid #d6e2f2;
  display: flex;
  align-items: center;
  white-space: nowrap;
  overflow: hidden;
  min-width: 0;
  color: #222;
}
.td-name { padding: 0 8px 0 11px; }
.row-icon { width: 24px; height: 24px; margin-right: 7px; flex: none; }
.row-icon .ic { width: 24px; height: 24px; display: block; stroke: #333; stroke-width: 1.700; }
.ri-play { fill: #111; }
.ri-ws { stroke-width: 2 !important; }
.ri-json { stroke-width: 2 !important; }
.name-text { overflow: hidden; text-overflow: ellipsis; flex: 1; min-width: 0; }
.td-init a { color: #0b5ca8; text-decoration: underline; text-decoration-thickness: 2px; text-underline-offset: 3px; white-space: nowrap; }
.td-init a.plain { color: #777; text-decoration: none; }
.td-init { padding-right: 0; }
.td-r { justify-content: flex-end; }
.pending { color: #777; }
.td-ful { color: #777; display: block; line-height: 37px; text-overflow: ellipsis; padding-right: 0; border-right: 0; }

.vbar { flex: 1; position: relative; background: #fafafa; }
.vbar-up, .vbar-down {
  position: absolute;
  left: 6px;
  width: 0;
  height: 0;
  border-left: 9px solid transparent;
  border-right: 9px solid transparent;
}
.vbar-up { top: 17px; border-bottom: 11px solid #8a8a8a; }
.vbar-down { top: 1284px; border-top: 11px solid #8a8a8a; }
.vbar-thumb {
  position: absolute;
  left: 5px;
  top: 587px;
  width: 19px;
  height: 680px;
  background: #8a8a8a;
  border-radius: 10px;
}

.dt-status {
  height: 48px;
  background: #fff;
  border-top: 2px solid #d6e2f2;
  border-bottom: 2px solid #d6e2f2;
  box-sizing: border-box;
  display: flex;
  align-items: center;
  gap: 16px;
  padding: 3px 0 0 19px;
  color: #444;
}
.st-dom { color: #1a5fd8; }
.st-load { color: #c62828; }

.dt-drawer {
  height: 50px;
  background: #edf1f9;
  border-bottom: 2px solid #d0e0f5;
  box-sizing: border-box;
  display: flex;
  align-items: flex-end;
  padding-left: 19px;
  position: relative;
  color: #555;
}
.dr-tab { height: 44px; display: flex; align-items: center; padding-top: 6px; box-sizing: border-box; }
.dr-console { margin-right: 34px; }
.dr-issues { margin-right: 14px; }
.dr-active {
  width: 103px;
  background: #fff;
  color: #1a5fd8;
  justify-content: center;
}
.dr-plus { width: 26px; height: 26px; align-self: center; margin-left: 14px; margin-top: -6px; }
.dr-r1 { width: 30px; height: 30px; position: absolute; right: 65px; top: 10px; stroke: #555; }
.dr-dock { position: absolute; right: 9px; top: 8px; width: 34px; height: 34px; background: #e3e8f2; display: flex; align-items: center; justify-content: center; }
.dr-dock .ic { width: 30px; height: 30px; stroke: #444; }

.dt-find {
  height: 47px;
  background: #fff;
  border-bottom: 2px solid #d6e2f2;
  box-sizing: border-box;
  display: flex;
  align-items: center;
  padding-left: 9px;
}
.find-input {
  width: 1336px;
  height: 42px;
  background: #edf1f9;
  border-radius: 21px;
  box-sizing: border-box;
  display: flex;
  align-items: center;
  padding-left: 14px;
  color: #666;
}
.fi2 { width: 28px; height: 28px; stroke: #555; }
.find-label { margin-left: 12px; flex: 1; }
.find-re { font-weight: 700; margin-right: 28px; color: #555; }
.find-aa { font-weight: 700; margin-right: 24px; color: #555; }
.ti2 { width: 30px; height: 30px; margin-left: 19px; stroke: #444; }
.dt-empty { height: 267px; background: #fff; }
.dt-foot { flex: 1; background: #fff; border-top: 2px solid #d6e2f2; }
</style>
